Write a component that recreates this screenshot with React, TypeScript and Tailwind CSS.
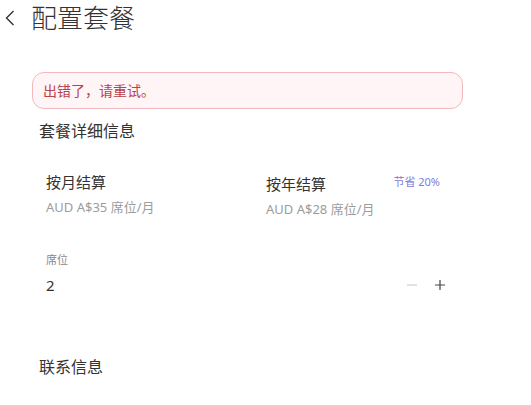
import React, { useState } from 'react';

const font = { fontFamily: '"Noto Sans", "Noto Sans CJK SC", sans-serif' };

type PlanProps = {
  title: string;
  price: string;
  badge?: string;
};

const PlanOption: React.FC<PlanProps> = ({ title, price, badge }) => (
  <div className="flex flex-col px-[7px] py-2">
    <div className="flex items-center justify-between pr-[16px] h-[24px]">
      <span className={`text-[15px] leading-[22px] text-[#333] ${badge ? 'mt-[3px]' : ''}`}>{title}</span>
      {badge && <span className="text-[11px] leading-[16px] text-[#7a7ed8]">{badge}</span>}
    </div>
    <span className={`text-[13px] leading-[18px] text-[#9c9c9c] ${badge ? 'mt-[6px]' : 'mt-[4px]'}`}>{price}</span>
  </div>
);

export default function App() {
  const [seats, setSeats] = useState(2);

  return (
    <div className="min-h-[405px] w-[531px] bg-white" style={font}>
      {/* Header */}
      <header className="flex items-center h-[36px] pl-[5px]">
        <button className="w-[12px] h-[20px] flex items-center justify-start text-[#333]" aria-label="返回">
          <svg width="10" height="16" viewBox="0 0 10 16" fill="none">
            <path d="M8.5 1 L1.5 8 L8.5 15" stroke="currentColor" strokeWidth="1.4" />
          </svg>
        </button>
        <h1 className="ml-[14px] text-[26px] leading-[36px] font-light text-[#333]">配置套餐</h1>
      </header>

      <main className="pl-[32px] pr-[68px] pt-[36px]">
        {/* Error */}
        <div className="h-[37px] rounded-[12px] border border-[#f2b8bd] bg-[#fff5f6] flex items-center px-[10px]">
          <span className="text-[14px] text-[#b8434a]">出错了，请重试。</span>
        </div>

        {/* Plan details */}
        <section className="pl-[7px] pt-[10px]">
          <h2 className="text-[16px] leading-[24px] text-[#333]">套餐详细信息</h2>
          <div className="grid grid-cols-2 gap-x-[16px] mt-[19px]">
            <PlanOption title="按月结算" price="AUD A$35 席位/月" />
            <PlanOption title="按年结算" price="AUD A$28 席位/月" badge="节省 20%" />
          </div>

          <div className="mt-[26px] px-[7px]">
            <div className="text-[11px] leading-[16px] text-[#888]">席位</div>
            <div className="flex items-center justify-between mt-[6px]">
              <span className="text-[15px] leading-[22px] text-[#333]">{seats}</span>
              <div className="flex items-center gap-[14px] pr-[9px]">
                <button
                  className="w-[14px] h-[14px] flex items-center justify-center text-[#cfcfcf]"
                  onClick={() => setSeats(Math.max(1, seats - 1))}
                  aria-label="减少"
                >
                  <svg width="12" height="12" viewBox="0 0 12 12">
                    <path d="M1 6 H11" stroke="currentColor" strokeWidth="1.2" />
                  </svg>
                </button>
                <button
                  className="w-[14px] h-[14px] flex items-center justify-center text-[#444]"
                  onClick={() => setSeats(seats + 1)}
                  aria-label="增加"
                >
                  <svg width="12" height="12" viewBox="0 0 12 12">
                    <path d="M1 6 H11 M6 1 V11" stroke="currentColor" strokeWidth="1.2" />
                  </svg>
                </button>
              </div>
            </div>
          </div>
        </section>

        {/* Contact */}
        <section className="pl-[7px] mt-[59px]">
          <h2 className="text-[16px] leading-[24px] text-[#333]">联系信息</h2>
        </section>
      </main>
    </div>
  );
}
